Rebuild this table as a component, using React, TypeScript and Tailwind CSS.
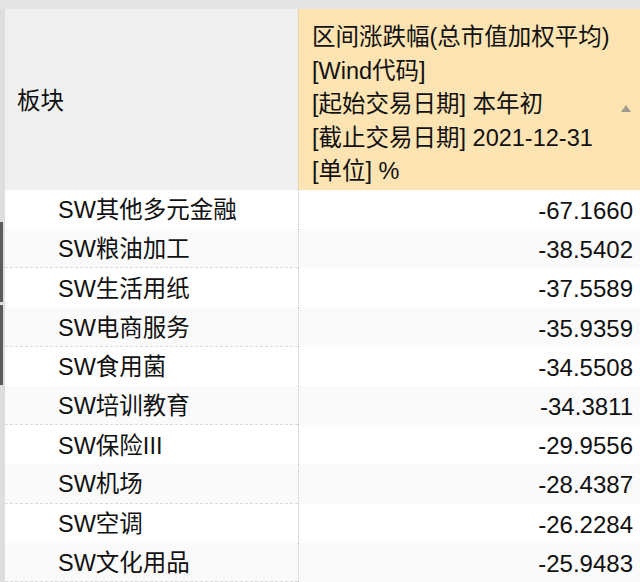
import React from "react";

const rows: { name: string; value: string }[] = [
  { name: "SW其他多元金融", value: "-67.1660" },
  { name: "SW粮油加工", value: "-38.5402" },
  { name: "SW生活用纸", value: "-37.5589" },
  { name: "SW电商服务", value: "-35.9359" },
  { name: "SW食用菌", value: "-34.5508" },
  { name: "SW培训教育", value: "-34.3811" },
  { name: "SW保险III", value: "-29.9556" },
  { name: "SW机场", value: "-28.4387" },
  { name: "SW空调", value: "-26.2284" },
  { name: "SW文化用品", value: "-25.9483" },
];

const headerLines = [
  "区间涨跌幅(总市值加权平均)",
  "[Wind代码]",
  "[起始交易日期] 本年初",
  "[截止交易日期] 2021-12-31",
  "[单位] %",
];

export default function App() {
  return (
    <div
      className="w-[640px] h-[582px] overflow-hidden bg-[#e3e3e3] flex flex-col text-[#111]"
      style={{ fontFamily: '"Liberation Sans", "Noto Sans CJK SC", sans-serif' }}
    >
      <div className="h-[9px] shrink-0" />
      <div className="flex flex-1 min-h-0">
        {/* left window edge */}
        <div className="w-[5px] shrink-0 bg-[#dedede] flex flex-col">
          <div className="h-[213px] shrink-0" />
          <div className="w-[3px] h-[80px] bg-[#5b5b5b]" />
          <div className="h-[3px]" />
          <div className="w-[3px] h-[80px] bg-[#5b5b5b]" />
        </div>

        <div className="flex-1 flex flex-col bg-white">
          {/* header */}
          <div className="flex h-[181px] shrink-0">
            <div className="w-[293px] shrink-0 bg-[#efefef] flex items-center pl-[12px] pt-[5px] text-[23.5px]">
              板块
            </div>
            <div className="flex-1 bg-[#fde4b2] border-l border-dotted border-[#d9c9a6] flex justify-between pl-[13px] pr-[9px]">
              <div className="pt-[12px] text-[23.5px] leading-[33.5px] whitespace-nowrap">
                {headerLines.map((l) => (
                  <div key={l}>{l}</div>
                ))}
              </div>
              <div className="self-center mt-[18px] w-0 h-0 border-l-[5px] border-r-[5px] border-b-[7px] border-l-transparent border-r-transparent border-b-[#a39c8e]" />
            </div>
          </div>

          {/* body */}
          {rows.map((r, i) => (
            <div
              key={r.name}
              className={
                "flex h-[39.2px] shrink-0 " + (i % 2 === 1 ? "bg-[#fafafa]" : "bg-white")
              }
            >
              <div
                className={
                  "w-[293px] shrink-0 flex items-center pl-[53px] pt-[3px] text-[23.5px] " +
                  (i % 2 === 1 ? "border-b border-dashed border-[#dcdcdc]" : "")
                }
              >
                {r.name}
              </div>
              <div className="flex-1 border-l border-dotted border-[#c4c4c4] flex items-center justify-end pr-[7px] pt-[3px] text-[24px]">
                {r.value}
              </div>
            </div>
          ))}
        </div>
      </div>
    </div>
  );
}
